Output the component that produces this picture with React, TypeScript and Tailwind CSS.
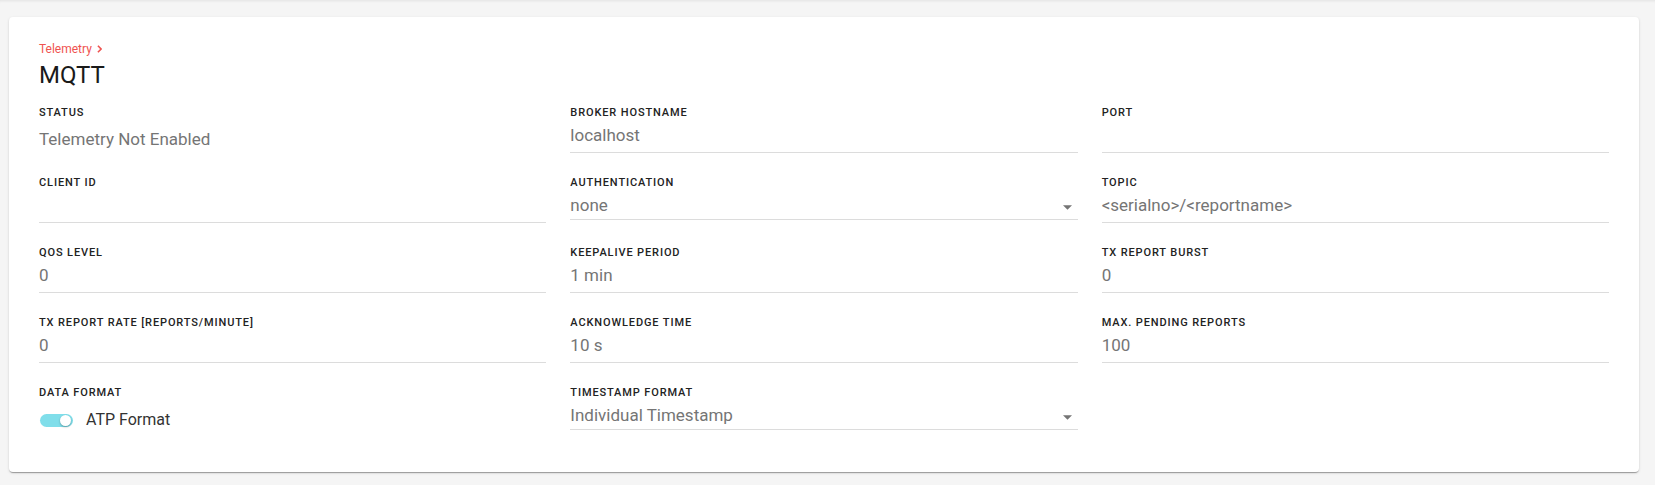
/**
 * MqttSettings — telemetry MQTT configuration card.
 * Read-only rendering of the broker / reporting fields in a three column grid.
 */
import * as React from "react";

type Field =
  | { kind: "static"; label: string; value: string }
  | { kind: "input"; label: string; value: string }
  | { kind: "select"; label: string; value: string }
  | { kind: "switch"; label: string; value: string; checked: boolean }
  | { kind: "empty" };

const FIELDS: Field[] = [
  { kind: "static", label: "Status", value: "Telemetry Not Enabled" },
  { kind: "input", label: "Broker Hostname", value: "localhost" },
  { kind: "input", label: "Port", value: "" },

  { kind: "input", label: "Client ID", value: "" },
  { kind: "select", label: "Authentication", value: "none" },
  { kind: "input", label: "Topic", value: "<serialno>/<reportname>" },

  { kind: "input", label: "QoS Level", value: "0" },
  { kind: "input", label: "Keepalive Period", value: "1 min" },
  { kind: "input", label: "TX Report Burst", value: "0" },

  { kind: "input", label: "TX Report Rate [Reports/Minute]", value: "0" },
  { kind: "input", label: "Acknowledge Time", value: "10 s" },
  { kind: "input", label: "Max. Pending Reports", value: "100" },

  { kind: "switch", label: "Data Format", value: "ATP Format", checked: true },
  { kind: "select", label: "Timestamp Format", value: "Individual Timestamp" },
  { kind: "empty" },
];

// ── Pieces ──────────────────────────────────────────────────────────────────

function FieldLabel({ children }: { children: React.ReactNode }) {
  return (
    <div className="h-4 text-[11px] leading-4 font-medium uppercase tracking-[0.08em] text-[#222222]">
      {children}
    </div>
  );
}

function DropArrow() {
  return (
    <svg viewBox="0 0 10 5" className="mt-[12px] mr-[6px] h-[5px] w-[9px] shrink-0 fill-[#757575]">
      <path d="M0 0l5 5 5-5z" />
    </svg>
  );
}

function Toggle({ checked }: { checked: boolean }) {
  return (
    <span
      className={
        checked
          ? "relative inline-flex h-[13px] w-[33px] shrink-0 items-center rounded-full bg-[#80deea]"
          : "relative inline-flex h-[13px] w-[33px] shrink-0 items-center rounded-full bg-[#bdbdbd]"
      }
    >
      <span
        className={
          checked
            ? "absolute right-[2px] h-[11px] w-[11px] rounded-full bg-white shadow-[0_1px_2px_rgba(0,0,0,0.3)]"
            : "absolute left-[2px] h-[11px] w-[11px] rounded-full bg-white shadow-[0_1px_2px_rgba(0,0,0,0.3)]"
        }
      />
    </span>
  );
}

function FieldCell({ field }: { field: Field }) {
  if (field.kind === "empty") return <div />;

  return (
    <div className="flex flex-col">
      <FieldLabel>{field.label}</FieldLabel>

      {field.kind === "static" && (
        <div className="pt-[6px] text-[17px] leading-6 text-[#757575]">{field.value}</div>
      )}

      {field.kind === "input" && (
        <div className="h-[32px] border-b border-[#dcdcdc] pt-[2px] text-[17px] leading-6 text-[#757575]">
          {field.value}
        </div>
      )}

      {field.kind === "select" && (
        <div className="flex h-[29px] border-b border-[#dcdcdc] pt-[2px] text-[17px] leading-6 text-[#757575]">
          <span className="flex-1">{field.value}</span>
          <DropArrow />
        </div>
      )}

      {field.kind === "switch" && (
        <div className="flex items-center gap-[13px] pt-[7px] pl-px text-base leading-6 text-[#333333]">
          <Toggle checked={field.checked} />
          <span>{field.value}</span>
        </div>
      )}
    </div>
  );
}

// ── Page ────────────────────────────────────────────────────────────────────

export default function App() {
  return (
    <div
      className="min-h-[485px] bg-[#f5f5f5] pt-[17px] pl-[9px] pr-[16px] shadow-[inset_0_3px_3px_-2px_rgba(0,0,0,0.08)]"
      style={{ fontFamily: "Roboto, 'Noto Sans', 'Liberation Sans', sans-serif" }}
    >
      <div className="w-[1630px] rounded-[4px] bg-white px-[30px] pt-[24px] pb-[40px] shadow-[0_2px_1px_-1px_rgba(0,0,0,0.2),0_1px_1px_0_rgba(0,0,0,0.14),0_1px_3px_0_rgba(0,0,0,0.12)]">
        {/* Breadcrumb */}
        <div className="flex h-4 items-center gap-[5px] text-xs leading-4 text-[#ef5350]">
          <span>Telemetry</span>
          <svg viewBox="0 0 6 10" className="h-[8px] w-[5px] fill-none stroke-[#ef5350] stroke-[2]">
            <path d="M1 1l4 4-4 4" />
          </svg>
        </div>

        <h1 className="mt-[2px] text-2xl leading-8 font-normal text-[#1a1a1a]">MQTT</h1>

        {/* Fields */}
        <div className="mt-[14px] grid grid-cols-3 items-start gap-x-6 gap-y-[22px]">
          {FIELDS.map((field, i) => (
            <FieldCell key={i} field={field} />
          ))}
        </div>
      </div>
    </div>
  );
}
